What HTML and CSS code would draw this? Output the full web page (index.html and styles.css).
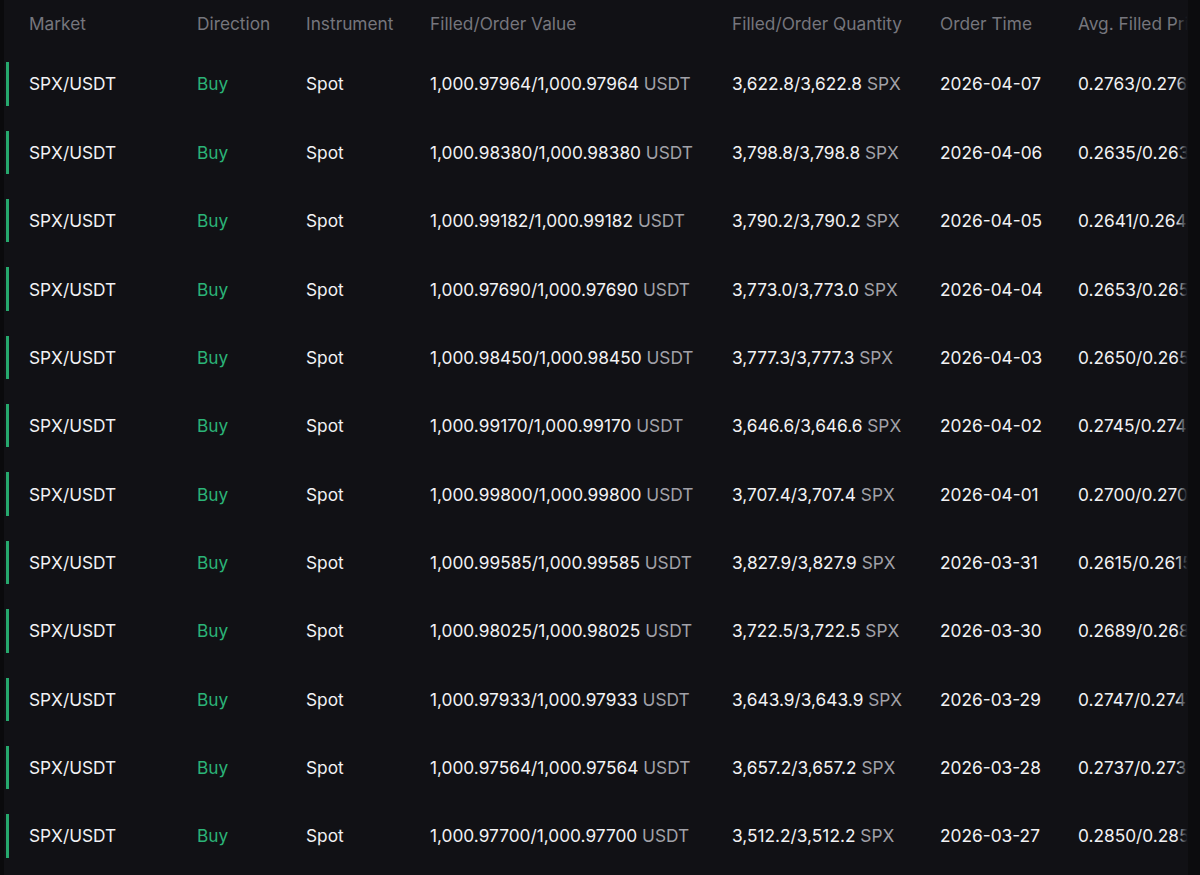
FILE: index.html
```html
<!DOCTYPE html>
<html lang="en">
<head>
<meta charset="utf-8">
<title>Order History</title>
<link rel="stylesheet" href="styles.css">
</head>
<body>
<div class="page">
  <div class="table">
    <div class="row head">
      <div>Market</div><div>Direction</div><div>Instrument</div><div>Filled/Order Value</div><div>Filled/Order Quantity</div><div>Order Time</div><div class="clip">Avg. Filled Price</div>
    </div>
    <div class="row"><div>SPX/USDT</div><div class="buy">Buy</div><div>Spot</div><div>1,000.97964/1,000.97964 <span class="u">USDT</span></div><div>3,622.8/3,622.8 <span class="u">SPX</span></div><div>2026-04-07</div><div class="clip">0.2763/0.2763</div></div>
    <div class="row"><div>SPX/USDT</div><div class="buy">Buy</div><div>Spot</div><div>1,000.98380/1,000.98380 <span class="u">USDT</span></div><div>3,798.8/3,798.8 <span class="u">SPX</span></div><div>2026-04-06</div><div class="clip">0.2635/0.2635</div></div>
    <div class="row"><div>SPX/USDT</div><div class="buy">Buy</div><div>Spot</div><div>1,000.99182/1,000.99182 <span class="u">USDT</span></div><div>3,790.2/3,790.2 <span class="u">SPX</span></div><div>2026-04-05</div><div class="clip">0.2641/0.2641</div></div>
    <div class="row"><div>SPX/USDT</div><div class="buy">Buy</div><div>Spot</div><div>1,000.97690/1,000.97690 <span class="u">USDT</span></div><div>3,773.0/3,773.0 <span class="u">SPX</span></div><div>2026-04-04</div><div class="clip">0.2653/0.2653</div></div>
    <div class="row"><div>SPX/USDT</div><div class="buy">Buy</div><div>Spot</div><div>1,000.98450/1,000.98450 <span class="u">USDT</span></div><div>3,777.3/3,777.3 <span class="u">SPX</span></div><div>2026-04-03</div><div class="clip">0.2650/0.2650</div></div>
    <div class="row"><div>SPX/USDT</div><div class="buy">Buy</div><div>Spot</div><div>1,000.99170/1,000.99170 <span class="u">USDT</span></div><div>3,646.6/3,646.6 <span class="u">SPX</span></div><div>2026-04-02</div><div class="clip">0.2745/0.2745</div></div>
    <div class="row"><div>SPX/USDT</div><div class="buy">Buy</div><div>Spot</div><div>1,000.99800/1,000.99800 <span class="u">USDT</span></div><div>3,707.4/3,707.4 <span class="u">SPX</span></div><div>2026-04-01</div><div class="clip">0.2700/0.2700</div></div>
    <div class="row"><div>SPX/USDT</div><div class="buy">Buy</div><div>Spot</div><div>1,000.99585/1,000.99585 <span class="u">USDT</span></div><div>3,827.9/3,827.9 <span class="u">SPX</span></div><div>2026-03-31</div><div class="clip">0.2615/0.2615</div></div>
    <div class="row"><div>SPX/USDT</div><div class="buy">Buy</div><div>Spot</div><div>1,000.98025/1,000.98025 <span class="u">USDT</span></div><div>3,722.5/3,722.5 <span class="u">SPX</span></div><div>2026-03-30</div><div class="clip">0.2689/0.2689</div></div>
    <div class="row"><div>SPX/USDT</div><div class="buy">Buy</div><div>Spot</div><div>1,000.97933/1,000.97933 <span class="u">USDT</span></div><div>3,643.9/3,643.9 <span class="u">SPX</span></div><div>2026-03-29</div><div class="clip">0.2747/0.2747</div></div>
    <div class="row"><div>SPX/USDT</div><div class="buy">Buy</div><div>Spot</div><div>1,000.97564/1,000.97564 <span class="u">USDT</span></div><div>3,657.2/3,657.2 <span class="u">SPX</span></div><div>2026-03-28</div><div class="clip">0.2737/0.2737</div></div>
    <div class="row"><div>SPX/USDT</div><div class="buy">Buy</div><div>Spot</div><div>1,000.97700/1,000.97700 <span class="u">USDT</span></div><div>3,512.2/3,512.2 <span class="u">SPX</span></div><div>2026-03-27</div><div class="clip">0.2850/0.2850</div></div>
  </div>
  <div class="fade"></div>
  <div class="edge"></div>
</div>
</body>
</html>
```
FILE: styles.css
```css
html, body {
  margin: 0;
  padding: 0;
  background: #0a0a0c;
}
body {
  font-family: Inter, "Noto Sans", sans-serif;
  font-size: 17.3px;
  color: #f2f2f4;
  -webkit-font-smoothing: antialiased;
}
.page {
  position: relative;
  margin-left: 4px;
  width: 1196px;
  height: 875px;
  background: #111115;
  overflow: hidden;
}
.table {
  display: flex;
  flex-direction: column;
  width: 1400px;
  padding-top: 1px;
}
.row {
  position: relative;
  display: grid;
  grid-template-columns: 168px 109px 124px 302px 208px 138px 200px;
  align-items: center;
  padding-left: 25px;
  height: 68.36px;
  white-space: nowrap;
}
.row::before {
  content: "";
  position: absolute;
  left: 2px;
  top: 12.5px;
  bottom: 12.5px;
  width: 2.5px;
  background: #26a86d;
}
.row.head {
  height: 48.8px;
  padding-bottom: 3px;
  box-sizing: border-box;
  color: #76767d;
}
.row.head::before {
  display: none;
}
.buy {
  color: #2bb478;
}
.u {
  color: #a1a1a8;
}
.fade {
  position: absolute;
  top: 0;
  right: 12px;
  width: 12px;
  height: 100%;
  background: linear-gradient(to right, rgba(17,17,21,0), #111115 95%);
}
.edge {
  position: absolute;
  top: 0;
  right: 0;
  width: 12px;
  height: 100%;
  background: #0c0c0e;
}
```
